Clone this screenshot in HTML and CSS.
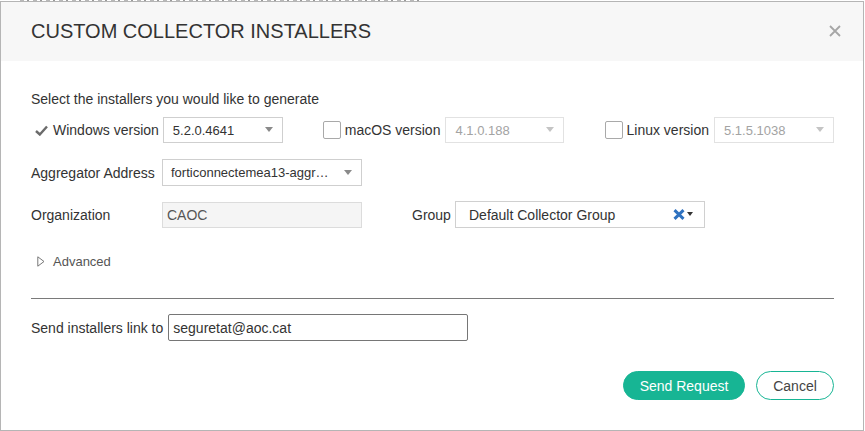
FILE: index.html
```html
<!DOCTYPE html>
<html>
<head>
<meta charset="utf-8">
<link rel="stylesheet" href="styles.css">
</head>
<body>
<div class="behind"></div>
<div class="modal">
  <div class="modal-header">
    <h1 class="title">CUSTOM COLLECTOR INSTALLERS</h1>
    <svg class="close" width="12" height="12" viewBox="0 0 12 12"><path d="M1 1L11 11M11 1L1 11" stroke="#a6a6a6" stroke-width="1.8" fill="none"/></svg>
  </div>
  <div class="modal-body">
    <p class="intro">Select the installers you would like to generate</p>
    <div class="os-row">
      <div class="os os-win">
        <svg class="tick" width="13" height="11" viewBox="0 0 13 11"><path d="M1 6L4.8 9.5L12 1.5" stroke="#6b6b6b" stroke-width="2.4" fill="none"/></svg>
        <span class="os-label">Windows version</span>
        <div class="select select-os"><span>5.2.0.4641</span><i class="arrow"></i></div>
      </div>
      <div class="os os-mac">
        <span class="box"></span>
        <span class="os-label">macOS version</span>
        <div class="select select-os disabled"><span>4.1.0.188</span><i class="arrow"></i></div>
      </div>
      <div class="os os-linux">
        <span class="box"></span>
        <span class="os-label">Linux version</span>
        <div class="select select-os disabled"><span>5.1.5.1038</span><i class="arrow"></i></div>
      </div>
    </div>
    <div class="field-row row-agg">
      <span class="field-label">Aggregator Address</span>
      <div class="select select-agg"><span>forticonnectemea13-aggr…</span><i class="arrow"></i></div>
    </div>
    <div class="field-row row-org">
      <span class="field-label">Organization</span>
      <div class="readonly">CAOC</div>
      <span class="group-label">Group</span>
      <div class="group-select">
        <span>Default Collector Group</span>
        <svg class="clear" width="12" height="11" viewBox="0 0 12 11"><path d="M1.5 1.2L10.5 9.8M10.5 1.2L1.5 9.8" stroke="#2f72c0" stroke-width="3" fill="none"/></svg>
        <i class="caret"></i>
      </div>
    </div>
    <div class="advanced">
      <svg class="adv-tri" width="8" height="11" viewBox="0 0 8 11"><path d="M0.8 0.8L7 5.5L0.8 10.2Z" stroke="#777" stroke-width="1" fill="none"/></svg>
      <span>Advanced</span>
    </div>
    <hr class="divider">
    <div class="send-row">
      <span class="send-label">Send installers link to</span>
      <div class="email">seguretat@aoc.cat</div>
    </div>
    <div class="actions">
      <button class="btn btn-primary">Send Request</button>
      <button class="btn btn-outline">Cancel</button>
    </div>
  </div>
</div>
</body>
</html>
```
FILE: styles.css
```css
* { box-sizing: border-box; }
html, body { margin: 0; padding: 0; background: #fff; }
body {
  font-family: "Liberation Sans", Arial, sans-serif;
  color: #333;
  width: 865px;
  height: 431px;
  overflow: hidden;
}
.behind {
  height: 1px;
  margin-left: 20px;
  width: 1210px;
  max-width: 400px;
  background: repeating-linear-gradient(90deg, #b8b8b8 0 4px, transparent 4px 7px, #9a9a9a 7px 9px, transparent 9px 13px);
}
.modal {
  width: 864px;
  height: 430px;
  border: 1px solid #b5b5b5;
  background: #fff;
}
.modal-header {
  height: 59px;
  background: #f7f7f7;
  display: flex;
  align-items: center;
  justify-content: space-between;
  padding: 0 22px 0 30px;
}
.title {
  margin: 0;
  font-weight: normal;
  font-size: 20px;
  color: #333;
  padding-bottom: 1px;
}
.close { display: block; margin-bottom: 1px; }
.modal-body { padding: 0 29px 0 30px; }
.intro {
  margin: 28px 0 0;
  font-size: 14px;
  line-height: 20px;
  color: #333;
}
.os-row {
  display: flex;
  align-items: center;
  margin-top: 8px;
  height: 26px;
}
.os { display: flex; align-items: center; }
.os-win { width: 292px; }
.os-mac { width: 282px; }
.os-label { font-size: 14px; color: #333; white-space: nowrap; }
.tick { margin: 0 5px 0 4px; }
.box {
  width: 18px;
  height: 18px;
  border: 1px solid #a9a9a9;
  border-radius: 2px;
  margin-right: 4px;
  background: #fff;
}
.select {
  position: relative;
  display: flex;
  align-items: center;
  border: 1px solid #cfcfcf;
  background: #fff;
  font-size: 13px;
  color: #333;
  padding-left: 9px;
  white-space: nowrap;
}
.select .arrow {
  position: absolute;
  right: 9px;
  top: 50%;
  margin-top: -3px;
  width: 0;
  height: 0;
  border-left: 4px solid transparent;
  border-right: 4px solid transparent;
  border-top: 5px solid #8a8a8a;
}
.select-os { width: 120px; height: 26px; margin-left: 4px; }
.os-mac .select-os { width: 119px; margin-left: 5px; }
.os-linux .select-os { width: 120px; margin-left: 5px; }
.select.disabled { border-color: #e2e2e2; color: #a3a3a3; }
.select.disabled .arrow { border-top-color: #c4c4c4; }
.field-row { display: flex; align-items: center; }
.field-label { width: 131px; font-size: 14px; color: #333; white-space: nowrap; }
.row-agg { margin-top: 16px; height: 27px; }
.select-agg { width: 200px; height: 27px; padding-left: 8px; }
.row-org { margin-top: 15px; height: 27px; }
.readonly {
  width: 200px;
  height: 26px;
  background: #f5f5f5;
  border: 1px solid #dcdcdc;
  font-size: 14px;
  color: #555;
  padding-left: 4px;
  display: flex;
  align-items: center;
}
.group-label { margin-left: 50px; width: 43px; font-size: 14px; color: #333; }
.group-select {
  width: 250px;
  height: 27px;
  border: 1px solid #d0d0d0;
  display: flex;
  align-items: center;
  padding: 0 11px 0 13px;
  font-size: 14px;
  color: #333;
}
.group-select span { flex: 1; }
.clear { display: block; margin-right: 2px; }
.caret {
  width: 0;
  height: 0;
  border-left: 3.5px solid transparent;
  border-right: 3.5px solid transparent;
  border-top: 4px solid #333;
  margin-bottom: 1px;
}
.advanced {
  display: flex;
  align-items: center;
  margin-top: 23px;
  height: 20px;
  font-size: 13px;
  color: #555;
}
.adv-tri { margin: 0 8px 0 6px; }
.divider {
  margin: 27px 0 0;
  border: 0;
  border-top: 1px solid #7a7a7a;
  height: 0;
  width: 803px;
}
.send-row {
  display: flex;
  align-items: center;
  margin-top: 15px;
  height: 27px;
}
.send-label { font-size: 14px; color: #333; white-space: nowrap; margin-right: 5px; }
.email {
  width: 300px;
  height: 27px;
  border: 1px solid #767676;
  border-radius: 2px;
  font-size: 14px;
  color: #333;
  padding-left: 4px;
  display: flex;
  align-items: center;
}
.actions {
  display: flex;
  justify-content: flex-end;
  gap: 11px;
  margin-top: 30px;
  width: 803px;
}
.btn {
  height: 29px;
  border-radius: 15px;
  font-family: "Liberation Sans", Arial, sans-serif;
  font-size: 14px;
  padding: 0;
  cursor: pointer;
}
.btn-primary {
  width: 122px;
  background: #17b594;
  border: 1px solid #17b594;
  color: #fff;
}
.btn-outline {
  width: 78px;
  background: #fff;
  border: 1px solid #17b594;
  color: #444;
}
```
